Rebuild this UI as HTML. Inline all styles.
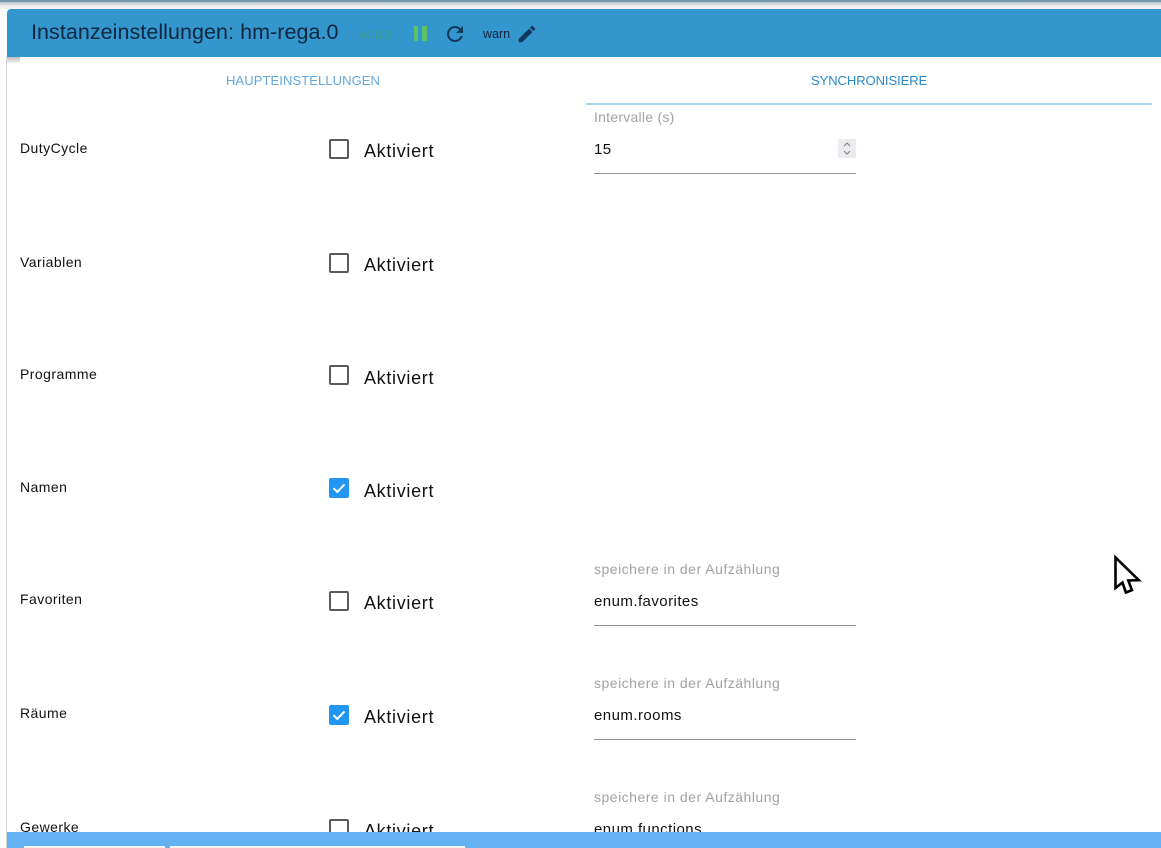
<!DOCTYPE html>
<html lang="de">
<head>
<meta charset="utf-8">
<title>Instanzeinstellungen</title>
<style>
html,body{margin:0;padding:0;background:#fff}
#p{position:relative;width:1161px;height:848px;overflow:hidden;background:#fff;font-family:"Liberation Sans",sans-serif}
#p div,#p span.a,#p svg{position:absolute}
.t{white-space:nowrap;line-height:20px}
.l{font-size:14px;color:#111;letter-spacing:.45px;left:20px}
.k{font-size:18px;color:#111;letter-spacing:.68px;left:364px}
.c{left:329px;width:16px;height:16px;border:2px solid #5a5a5a;border-radius:2px;background:#fff}
.x{left:329px;width:20px;height:20px;border-radius:2px;background:#2196f3}
.h{font-size:14px;color:#a2a2a2;letter-spacing:.5px;left:594px}
.v{font-size:15px;color:#111;letter-spacing:.45px;left:594px}
.u{left:594px;width:262px;height:1px;background:#949494}
</style>
</head>
<body>
<div id="p">
<div style="left:0;top:0;width:1161px;height:2px;background:#6f98ad"></div>
<div style="left:0;top:2px;width:1161px;height:7px;background:linear-gradient(#b9c6cd,#efeff0 60%,#f4f0f0)"></div>
<div style="left:6px;top:57px;width:1px;height:791px;background:#d2d2d2"></div>
<div style="left:7px;top:57px;width:13px;height:6px;background:linear-gradient(#bdbdbd,#f2f2f2)"></div>
<div style="left:7px;top:9px;width:1154px;height:48px;background:#3396cc;border-radius:4px 0 0 0"></div>

<div class="t" style="left:31px;top:20px;font-size:21.5px;line-height:24px;color:#10253f;letter-spacing:.05px">Instanzeinstellungen: hm-rega.0</div>
<div class="t" style="left:359px;top:25px;font-size:12px;color:#3f9f78;letter-spacing:-.1px">v4.0.0</div>
<div style="left:414px;top:26px;width:4px;height:15px;background:#5cc267"></div>
<div style="left:422px;top:26px;width:5px;height:15px;background:#5cc267"></div>
<svg style="left:443px;top:22px" width="24" height="24" viewBox="0 0 24 24"><path fill="#12395c" d="M17.65 6.35A7.96 7.96 0 0 0 12 4a8 8 0 1 0 7.73 10h-2.08A6 6 0 1 1 12 6c1.66 0 3.14.69 4.22 1.78L13 11h7V4l-2.35 2.35z"/></svg>
<div class="t" style="left:483px;top:24px;font-size:12.5px;color:#10253f">warn</div>
<svg style="left:516px;top:23px" width="22" height="22" viewBox="0 0 24 24"><path fill="#12395c" d="M3 17.25V21h3.75L17.81 9.94l-3.75-3.75L3 17.25zM20.71 7.04a1 1 0 0 0 0-1.41l-2.34-2.34a1 1 0 0 0-1.41 0l-1.83 1.83 3.75 3.75 1.83-1.83z"/></svg>

<div class="t" style="left:226px;top:71px;font-size:13px;color:#62a8dc;letter-spacing:.09px">HAUPTEINSTELLUNGEN</div>
<div class="t" style="left:811px;top:71px;font-size:13px;color:#2a88cc;letter-spacing:-.06px">SYNCHRONISIERE</div>
<div style="left:586px;top:103px;width:566px;height:2px;background:#abd6ea"></div>

<div class="t l" style="top:138px">DutyCycle</div>
<div class="c" style="top:139px"></div>
<div class="t k" style="top:141px">Aktiviert</div>

<div class="t l" style="top:252px">Variablen</div>
<div class="c" style="top:253px"></div>
<div class="t k" style="top:255px">Aktiviert</div>

<div class="t l" style="top:364px">Programme</div>
<div class="c" style="top:365px"></div>
<div class="t k" style="top:368px">Aktiviert</div>

<div class="t l" style="top:477px">Namen</div>
<div class="x" style="top:478px"></div>
<svg style="left:329px;top:478px" width="20" height="20" viewBox="0 0 20 20"><path fill="none" stroke="#fff" stroke-width="2" d="M4.5 10.2l3.8 3.8 7.2-7.6"/></svg>
<div class="t k" style="top:481px">Aktiviert</div>

<div class="t l" style="top:589px">Favoriten</div>
<div class="c" style="top:591px"></div>
<div class="t k" style="top:593px">Aktiviert</div>

<div class="t l" style="top:703px">Räume</div>
<div class="x" style="top:705px"></div>
<svg style="left:329px;top:705px" width="20" height="20" viewBox="0 0 20 20"><path fill="none" stroke="#fff" stroke-width="2" d="M4.5 10.2l3.8 3.8 7.2-7.6"/></svg>
<div class="t k" style="top:707px">Aktiviert</div>

<div class="t l" style="top:817px">Gewerke</div>
<div class="c" style="top:819px"></div>
<div class="t k" style="top:821px">Aktiviert</div>

<div class="t h" style="top:107px;letter-spacing:.25px">Intervalle (s)</div>
<div class="t v" style="top:140px">15</div>
<div style="left:838px;top:139px;width:18px;height:19px;background:#ececf0"></div>
<svg style="left:838px;top:139px" width="18" height="19" viewBox="0 0 18 19"><path fill="none" stroke="#7b7b7b" d="M6 7l3-3 3 3M6 12l3 3 3-3"/></svg>
<div class="u" style="top:173px"></div>

<div class="t h" style="top:559px">speichere in der Aufzählung</div>
<div class="t v" style="top:592px">enum.favorites</div>
<div class="u" style="top:625px"></div>

<div class="t h" style="top:673px">speichere in der Aufzählung</div>
<div class="t v" style="top:706px">enum.rooms</div>
<div class="u" style="top:739px"></div>

<div class="t h" style="top:787px">speichere in der Aufzählung</div>
<div class="t v" style="top:820px">enum.functions</div>

<svg style="left:1112px;top:554px" width="30" height="42" viewBox="0 0 30 42"><path fill="#fff" stroke="#000" stroke-width="2.6" stroke-linejoin="miter" d="M3.5 3.5V34l7-5.5 3.4 10 6-2.4-3.6-9.6 10.5-.3z"/></svg>

<div style="left:7px;top:832px;width:1154px;height:16px;background:#64b2f4"></div>
<div style="left:24px;top:846px;width:141px;height:2px;background:#f2f6fa"></div>
<div style="left:170px;top:846px;width:295px;height:2px;background:#f2f6fa"></div>
</div>
</body>
</html>
